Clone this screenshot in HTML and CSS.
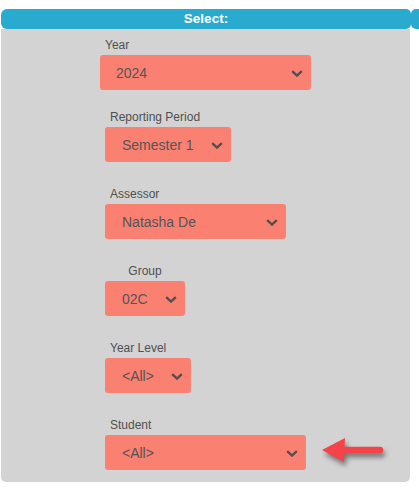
FILE: index.html
```html
<!DOCTYPE html>
<html>
<head>
<meta charset="utf-8">
<link rel="stylesheet" href="styles.css">
</head>
<body>
<div class="top">
  <div class="header">Select:</div>
  <div class="header-next"></div>
</div>
<div class="panel">
  <div class="field field-year">
    <div class="label">Year</div>
    <div class="select w-year"><span>2024</span><svg class="chev" viewBox="0 0 12 7"><path d="M1.2 1.2 L6 5.6 L10.8 1.2"/></svg></div>
  </div>
  <div class="field first-gap">
    <div class="label">Reporting Period</div>
    <div class="select w-period"><span>Semester 1</span><svg class="chev" viewBox="0 0 12 7"><path d="M1.2 1.2 L6 5.6 L10.8 1.2"/></svg></div>
  </div>
  <div class="field">
    <div class="label">Assessor</div>
    <div class="select w-assessor"><span>Natasha De</span><svg class="chev" viewBox="0 0 12 7"><path d="M1.2 1.2 L6 5.6 L10.8 1.2"/></svg></div>
  </div>
  <div class="field field-group">
    <div class="label label-center">Group</div>
    <div class="select w-group"><span>02C</span><svg class="chev" viewBox="0 0 12 7"><path d="M1.2 1.2 L6 5.6 L10.8 1.2"/></svg></div>
  </div>
  <div class="field">
    <div class="label">Year Level</div>
    <div class="select w-level"><span>&lt;All&gt;</span><svg class="chev" viewBox="0 0 12 7"><path d="M1.2 1.2 L6 5.6 L10.8 1.2"/></svg></div>
  </div>
  <div class="field">
    <div class="label">Student</div>
    <div class="select w-student"><span>&lt;All&gt;</span><svg class="chev" viewBox="0 0 12 7"><path d="M1.2 1.2 L6 5.6 L10.8 1.2"/></svg></div>
  </div>
  <svg class="arrow" viewBox="0 0 72 34" width="72" height="34">
    <line x1="24" y1="16" x2="62" y2="16" stroke="#f5434a" stroke-width="6.5" stroke-linecap="round"/>
    <polygon points="4,16 27,4 26,28" fill="#f5434a"/>
  </svg>
</div>
</body>
</html>
```

FILE: styles.css
```css
html, body {
  margin: 0;
  padding: 0;
  background: #ffffff;
  overflow: hidden;
}
body {
  padding: 9px 0 0 1px;
  font-family: "Liberation Sans", Arial, sans-serif;
}
.top {
  display: flex;
  height: 20px;
}
.header {
  width: 410px;
  flex: none;
  height: 20px;
  background: #29abd0;
  border-radius: 6px 5px 5px 6px;
  color: #ffffff;
  font-weight: bold;
  font-size: 13.5px;
  line-height: 20px;
  text-align: center;
}
.header-next {
  width: 8px;
  flex: none;
  height: 20px;
  background: #29abd0;
  border-radius: 5px 0 0 5px;
}
.panel {
  position: relative;
  width: 409px;
  background: #d3d3d3;
  border-radius: 0 0 5px 5px;
  padding: 9px 0 12px 0;
  display: flex;
  flex-direction: column;
  gap: 25px;
}
.field {
  display: flex;
  flex-direction: column;
  align-items: flex-start;
  gap: 3px;
  margin-left: 104px;
}
.field-year {
  margin-left: 99px;
}
.first-gap {
  margin-top: -5px;
}
.field-group {
  align-items: stretch;
  width: 80px;
}
.label {
  font-size: 12px;
  line-height: 14px;
  height: 14px;
  color: #505050;
  padding-left: 5px;
}
.label-center {
  padding-left: 0;
  text-align: center;
}
.select {
  box-sizing: border-box;
  height: 35px;
  background: #fa8072;
  border-radius: 3px;
  display: flex;
  align-items: center;
  justify-content: space-between;
  padding: 0 8px 0 17px;
  color: #555555;
  font-size: 14px;
}
.select span {
  white-space: nowrap;
}
.chev {
  width: 12px;
  height: 7px;
  flex: none;
  margin-top: 2px;
}
.chev path {
  fill: none;
  stroke: #4f4f4f;
  stroke-width: 2.3;
}
.w-year { width: 211px; padding-left: 16px; }
.w-period { width: 126px; }
.w-assessor { width: 181px; }
.w-group { width: 80px; }
.w-level { width: 86px; }
.w-student { width: 201px; }
.arrow {
  position: absolute;
  left: 317px;
  top: 405px;
  filter: drop-shadow(2px 4px 2.5px rgba(0, 0, 0, 0.45));
}
```
